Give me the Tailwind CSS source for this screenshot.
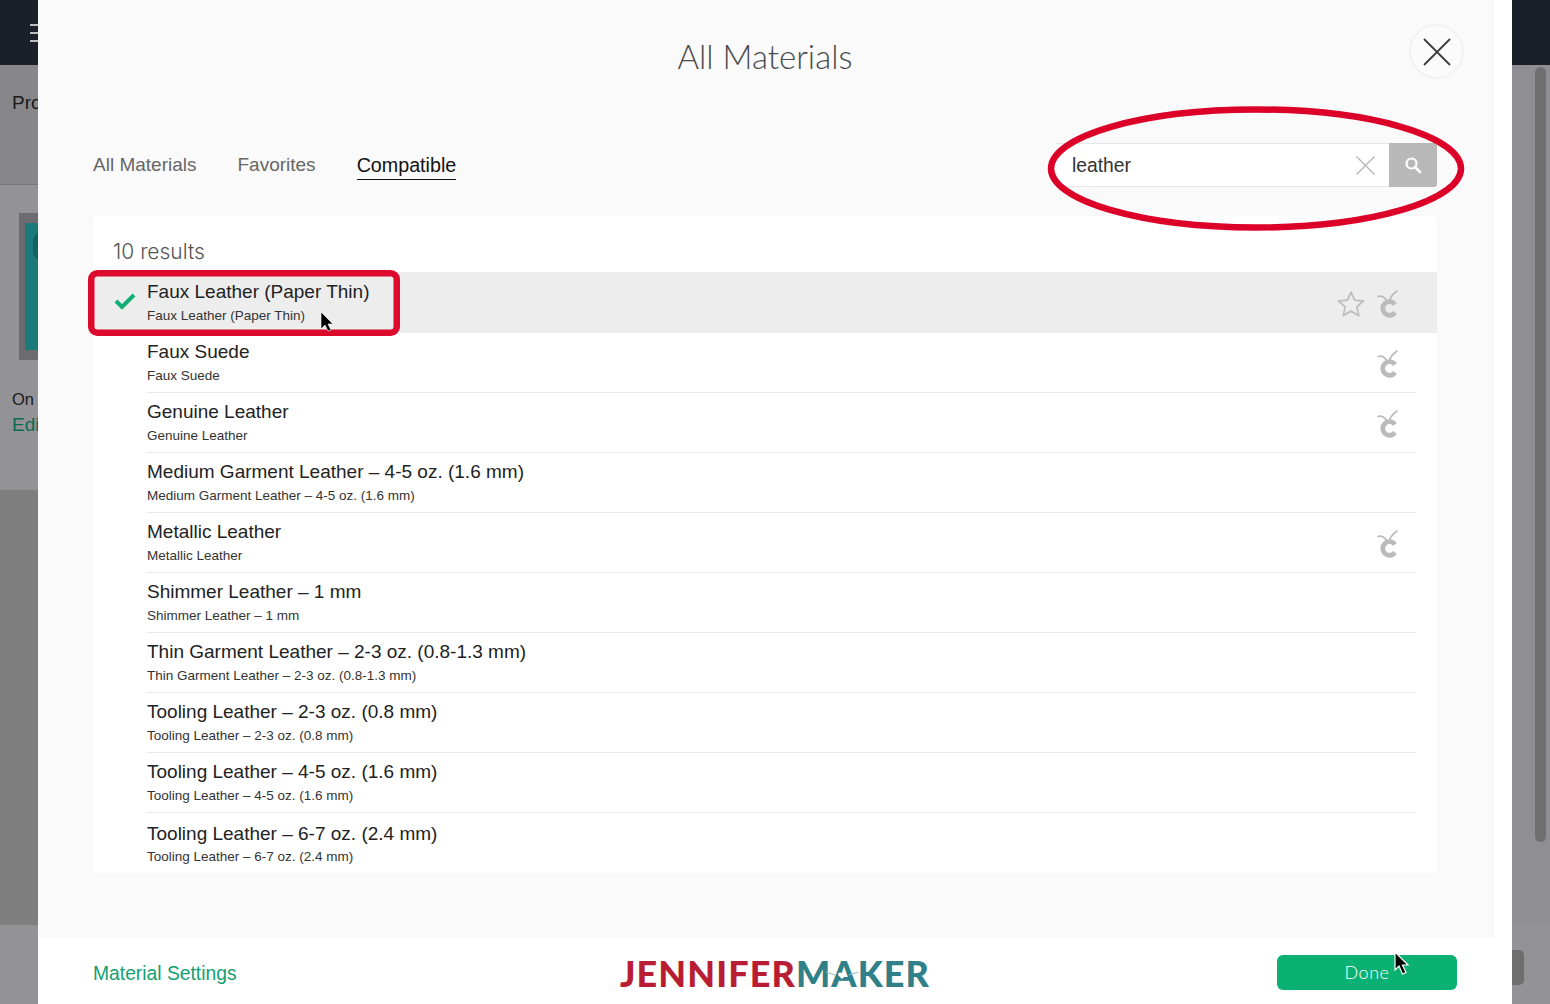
<!doctype html>
<html lang="en">
<head>
<meta charset="utf-8">
<script src="https://cdn.jsdelivr.net/npm/@tailwindcss/browser@4"></script>
<title>All Materials</title>
</head>
<body class="m-0 overflow-hidden">
<svg width="0" height="0" class="absolute">
  <defs>
    <g id="cc" fill="none" stroke="#bbbbbb" stroke-linecap="round">
      <path d="M1 6.500C4.500 5.500 7.500 7 9.500 10.500" stroke-width="1.600"/>
      <path d="M20 1C16.500 3.500 13.500 6 12.500 10.500" stroke-width="1.600"/>
      <path d="M18 14.500A6.800 6.800 0 1 0 18 22.500" stroke-width="4.800" stroke-linecap="butt"/>
    </g>
  </defs>
</svg>
<div class="relative flex w-[1550px] h-[1004px] overflow-hidden font-['Liberation_Sans',sans-serif]">
  <!-- left backdrop strip -->
  <div class="w-[38px] shrink-0 flex flex-col overflow-hidden whitespace-nowrap">
    <div class="h-[65px] bg-[#1b1f29] pt-[24px] pl-[30px] flex flex-col gap-[6px]">
      <div class="h-[2px] w-[8px] bg-[#b9bbbf]"></div>
      <div class="h-[2px] w-[8px] bg-[#b9bbbf]"></div>
      <div class="h-[2px] w-[8px] bg-[#b9bbbf]"></div>
    </div>
    <div class="h-[120px] bg-[#87878a] border-b border-[#777779] pl-[12px] pt-[26px] text-[19px] leading-[24px] text-[#1a1a1a]">Project</div>
    <div class="h-[305px] bg-[#929297] pl-[19px] pt-[28px]">
      <div class="w-[40px] h-[147px] bg-[#6c6c70] pl-[6px] pt-[10px] pb-[10px]">
        <div class="relative h-full bg-[#1a7a7a]">
          <div class="absolute left-[8px] top-[8px] w-[20px] h-[30px] rounded-full bg-[#125f64]"></div>
        </div>
      </div>
      <div class="mt-[26px] -ml-[7px] text-[16.500px] leading-[26px] text-[#1a1a1a]">On</div>
      <div class="-ml-[7px] text-[19px] leading-[26px] text-[#0b6a4c]">Edit</div>
    </div>
    <div class="h-[435px] bg-[#7f7f7f]"></div>
    <div class="flex-1 bg-[#929297]"></div>
  </div>

  <!-- modal -->
  <div class="w-[1474px] shrink-0 flex flex-col bg-white">
    <div class="flex-1 flex min-h-0">
      <main class="relative w-[1455px] bg-[#fafafb] border-r border-[#f3f3f4] flex flex-col">
        <h1 class="h-[143px] pt-[35px] text-center font-['Lato',sans-serif] font-light text-[33px] leading-[42px] text-[#4a4a4a]">All Materials</h1>
        <button class="absolute top-[24px] right-[28px] w-[55px] h-[55px] rounded-full bg-[#fbfbfb] border-2 border-[#f2f2f3] flex items-center justify-center" aria-label="Close">
          <svg width="28" height="28" viewBox="0 0 28 28" fill="none" stroke="#3d3d3d" stroke-width="1.800"><path d="M1 1L27 27M27 1L1 27"/></svg>
        </button>

        <div class="h-[44px] px-[55px] flex items-center justify-between">
          <nav class="flex gap-[41px] text-[19px] text-[#666]">
            <a class="leading-[24px]">All Materials</a>
            <a class="leading-[24px]">Favorites</a>
            <a class="leading-[24px] text-[19.700px] text-[#111] border-b border-[#111] pb-[2px] -mb-[3px]">Compatible</a>
          </nav>
          <div class="flex w-[381px] h-[44px]">
            <div class="flex-1 flex items-center justify-between bg-white border-y border-[#e6e6e6] pl-[16px] pr-[14px] text-[19.300px] text-[#333]">
              <span class="pt-[2px]">leather</span>
              <svg width="19" height="19" viewBox="0 0 19 19" fill="none" stroke="#b5b5b5" stroke-width="1.300"><path d="M0.500 0.500L18.500 18.500M18.500 0.500L0.500 18.500"/></svg>
            </div>
            <div class="w-[48px] bg-[#b8b8b8] rounded-r-[3px] flex items-center justify-center">
              <svg width="18" height="18" viewBox="0 0 18 18" fill="none" stroke="#fff" stroke-width="2.200"><circle cx="7.500" cy="7.500" r="5"/><path d="M11 11L16 16" stroke-linecap="round" stroke-width="2.600"/></svg>
            </div>
          </div>
        </div>

        <section class="mx-[55px] mt-[29px] h-[657px] bg-white rounded-[3px] shadow-[0_0_2px_rgba(0,0,0,0.06)] flex flex-col">
          <div class="h-[56px] pt-[23px] pl-[20px] font-['Inter',sans-serif] text-[21px] leading-[25px] text-[#555] font-light">10 results</div>

          <div class="h-[61px] flex bg-[#ededed] pr-[38px]">
            <div class="w-[54px] pl-[21px] pt-[20px]">
              <svg width="22" height="18" viewBox="0 0 22 18" fill="none" stroke="#10b075" stroke-width="4"><path d="M2 9L8 15L20 3"/></svg>
            </div>
            <div class="pt-[8px]">
              <div class="text-[19px] leading-[24px] text-[#222]">Faux Leather (Paper Thin)</div>
              <div class="mt-[2px] text-[13.500px] leading-[20px] text-[#333]">Faux Leather (Paper Thin)</div>
            </div>
            <div class="ml-auto flex gap-[12px] pt-[18px]">
              <svg width="28" height="28" viewBox="0 0 28 28" fill="none" stroke="#bdbdbd" stroke-width="1.800" stroke-linejoin="round"><path d="M14 2L17.600 10.200L26.500 11L19.800 16.900L21.800 25.700L14 21.100L6.200 25.700L8.200 16.900L1.500 11L10.400 10.200Z"/></svg>
              <svg width="22" height="28" viewBox="0 0 22 28"><use href="#cc"/></svg>
            </div>
          </div>

          <div class="h-[60px] ml-[54px] mr-[21px] pr-[17px] flex border-b border-[#e8e8e8]">
            <div class="pt-[7px]">
              <div class="text-[19px] leading-[24px] text-[#222]">Faux Suede</div>
              <div class="mt-[2px] text-[13.500px] leading-[20px] text-[#333]">Faux Suede</div>
            </div>
            <svg class="ml-auto mt-[17px]" width="22" height="28" viewBox="0 0 22 28"><use href="#cc"/></svg>
          </div>
          <div class="h-[60px] ml-[54px] mr-[21px] pr-[17px] flex border-b border-[#e8e8e8]">
            <div class="pt-[7px]">
              <div class="text-[19px] leading-[24px] text-[#222]">Genuine Leather</div>
              <div class="mt-[2px] text-[13.500px] leading-[20px] text-[#333]">Genuine Leather</div>
            </div>
            <svg class="ml-auto mt-[17px]" width="22" height="28" viewBox="0 0 22 28"><use href="#cc"/></svg>
          </div>
          <div class="h-[60px] ml-[54px] mr-[21px] pr-[17px] flex border-b border-[#e8e8e8]">
            <div class="pt-[7px]">
              <div class="text-[19px] leading-[24px] text-[#222]">Medium Garment Leather – 4-5 oz. (1.6 mm)</div>
              <div class="mt-[2px] text-[13.500px] leading-[20px] text-[#333]">Medium Garment Leather – 4-5 oz. (1.6 mm)</div>
            </div>
          </div>
          <div class="h-[60px] ml-[54px] mr-[21px] pr-[17px] flex border-b border-[#e8e8e8]">
            <div class="pt-[7px]">
              <div class="text-[19px] leading-[24px] text-[#222]">Metallic Leather</div>
              <div class="mt-[2px] text-[13.500px] leading-[20px] text-[#333]">Metallic Leather</div>
            </div>
            <svg class="ml-auto mt-[17px]" width="22" height="28" viewBox="0 0 22 28"><use href="#cc"/></svg>
          </div>
          <div class="h-[60px] ml-[54px] mr-[21px] pr-[17px] flex border-b border-[#e8e8e8]">
            <div class="pt-[7px]">
              <div class="text-[19px] leading-[24px] text-[#222]">Shimmer Leather – 1 mm</div>
              <div class="mt-[2px] text-[13.500px] leading-[20px] text-[#333]">Shimmer Leather – 1 mm</div>
            </div>
          </div>
          <div class="h-[60px] ml-[54px] mr-[21px] pr-[17px] flex border-b border-[#e8e8e8]">
            <div class="pt-[7px]">
              <div class="text-[19px] leading-[24px] text-[#222]">Thin Garment Leather – 2-3 oz. (0.8-1.3 mm)</div>
              <div class="mt-[2px] text-[13.500px] leading-[20px] text-[#333]">Thin Garment Leather – 2-3 oz. (0.8-1.3 mm)</div>
            </div>
          </div>
          <div class="h-[60px] ml-[54px] mr-[21px] pr-[17px] flex border-b border-[#e8e8e8]">
            <div class="pt-[7px]">
              <div class="text-[19px] leading-[24px] text-[#222]">Tooling Leather – 2-3 oz. (0.8 mm)</div>
              <div class="mt-[2px] text-[13.500px] leading-[20px] text-[#333]">Tooling Leather – 2-3 oz. (0.8 mm)</div>
            </div>
          </div>
          <div class="h-[60px] ml-[54px] mr-[21px] pr-[17px] flex border-b border-[#e8e8e8]">
            <div class="pt-[7px]">
              <div class="text-[19px] leading-[24px] text-[#222]">Tooling Leather – 4-5 oz. (1.6 mm)</div>
              <div class="mt-[2px] text-[13.500px] leading-[20px] text-[#333]">Tooling Leather – 4-5 oz. (1.6 mm)</div>
            </div>
          </div>
          <div class="h-[60px] ml-[54px] mr-[21px] pr-[17px] flex">
            <div class="pt-[9px]">
              <div class="text-[19px] leading-[24px] text-[#222]">Tooling Leather – 6-7 oz. (2.4 mm)</div>
              <div class="mt-[1px] text-[13.500px] leading-[20px] text-[#333]">Tooling Leather – 6-7 oz. (2.4 mm)</div>
            </div>
          </div>
        </section>
      </main>
      <div class="flex-1 bg-white"></div>
    </div>
    <footer class="h-[66px] pl-[55px] pr-[55px] pt-[3px] bg-white grid grid-cols-[1fr_auto_1fr] items-center">
      <a class="pt-[3px] text-[19.300px] text-[#12a071]">Material Settings</a>
      <div class="font-['Lato',sans-serif] font-black text-[36px] leading-[40px] tracking-[1.100px] whitespace-nowrap"><span class="text-[#b91d33]">JENNIFER</span><span class="text-[#2f8088]">MAKER</span></div>
      <button class="justify-self-end w-[180px] h-[35px] rounded-[6px] bg-[#0bb073] text-white font-['Lato',sans-serif] text-[18px] tracking-[0.5px] font-light">Done</button>
    </footer>
  </div>

  <!-- right backdrop strip -->
  <div class="w-[38px] shrink-0 flex flex-col">
    <div class="h-[65px] bg-[#1b1f29]"></div>
    <div class="h-[860px] bg-[#8e8e93] pl-[23px] pt-[2px]">
      <div class="w-[11px] h-[775px] rounded-full bg-[#6f6f72]"></div>
    </div>
    <div class="flex-1 bg-[#929297] pt-[25px]">
      <div class="w-[12px] h-[35px] rounded-r-[5px] bg-[#6e6e6e]"></div>
    </div>
  </div>

  <!-- annotations drawn over the screenshot -->
  <svg class="absolute left-0 top-0 pointer-events-none" width="1550" height="1004" viewBox="0 0 1550 1004" fill="none">
    <ellipse cx="1256" cy="168.500" rx="205" ry="59" stroke="#dc0029" stroke-width="6.500"/>
    <rect x="91.250" y="273.250" width="305.500" height="59.500" rx="6" stroke="#dc0a2d" stroke-width="6.500"/>
    <path d="M321 312V329L325 325L328 331L331 330L328 324L333 324Z" fill="#000" stroke="#fff" stroke-width="0.600"/>
    <path d="M1395 952V970L1399 966L1402.500 974L1406 972.500L1402.500 965L1408 965Z" fill="#000" stroke="#fff" stroke-width="1.200"/>
    <path d="M826 972L835 975M858 972L849 975" stroke="#8fbcc0" stroke-width="1"/>
    <path d="M842 979L838.500 975.500C837 973.500 839.500 971 842 973.500C844.500 971 847 973.500 845.500 975.500Z" fill="#fff"/>
  </svg>
</div>
</body>
</html>
